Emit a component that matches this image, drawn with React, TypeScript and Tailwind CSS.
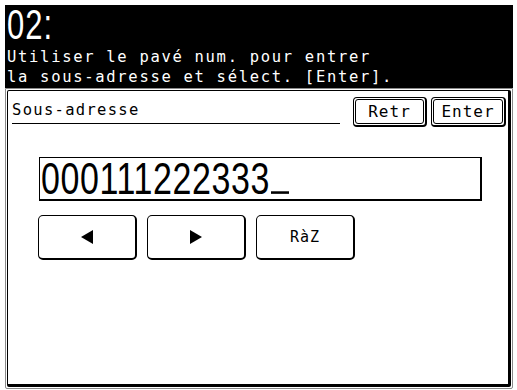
const mono = "font-['DejaVu_Sans_Mono','Liberation_Mono',monospace]";

function SoftKey({ label, width }: { label: string; width: string }) {
  return (
    <div className={`${width} h-[30px] rounded-[4px] border border-black border-r-2 border-b-2 p-[1px]`}>
      <div className="flex h-full items-center justify-center rounded-[3px] border border-black">
        <span className={`${mono} text-[16px] leading-none tracking-[1px] text-black`}>{label}</span>
      </div>
    </div>
  );
}

function Key({ children }: { children: React.ReactNode }) {
  return (
    <div className="flex h-[45px] w-[99px] items-center justify-center rounded-[5px] border border-black border-r-2 border-b-2 bg-white">
      {children}
    </div>
  );
}

export default function App() {
  return (
    <div className="h-[390px] w-[517px] overflow-hidden bg-white pl-[5px] pt-[5px]">
      {/* Header */}
      <div className="h-[83px] w-[508px] bg-black pl-[2px] pt-[1px] text-white">
        <div className="h-[40px] origin-top-left scale-y-[1.36] font-['Liberation_Sans',sans-serif] text-[31px] leading-[28px] tracking-[1px]">
          02:
        </div>
        <p className={`${mono} mt-[1px] text-[15.5px] leading-[20px] tracking-[1.7px]`}>
          Utiliser le pavé num. pour entrer
        </p>
        <p className={`${mono} text-[15.5px] leading-[20px] tracking-[1.7px]`}>
          la sous-adresse et sélect. [Enter].
        </p>
      </div>

      {/* Frame */}
      <div className="h-[301px] w-[508px] rounded-b-[2px] border border-[#8a8a8a] p-[1px]">
        <div className="h-full w-full rounded-[2px] border-l border-t border-black border-r-[3px] border-b-[3px]">
          <div className="flex items-start pt-[6px]">
            <div className="ml-[4px] h-[27px] w-[328px] border-b border-black">
              <span className={`${mono} text-[15.5px] leading-[20px] tracking-[1.3px] text-black`}>
                Sous-adresse
              </span>
            </div>
            <div className="ml-[13px] flex gap-[4px]">
              <SoftKey label="Retr" width="w-[74px]" />
              <SoftKey label="Enter" width="w-[75px]" />
            </div>
          </div>

          <div className="ml-[31px] mt-[30px] h-[44px] w-[443px] border border-black border-b-2 border-r-2 pl-[1px]">
            <div className="flex origin-top-left scale-y-[1.28] items-baseline font-['Liberation_Sans',sans-serif] text-[34px] leading-[32px] tracking-[0.6px] text-black">
              <span>000111222333</span>
              <span className="ml-[1px] inline-block h-[2px] w-[18px] bg-black" />
            </div>
          </div>

          <div className="ml-[30px] mt-[14px] flex gap-[10px]">
            <Key>
              <svg width="14" height="16" viewBox="0 0 14 16">
                <polygon points="13,1 13,15 1,8" fill="black" />
              </svg>
            </Key>
            <Key>
              <svg width="14" height="16" viewBox="0 0 14 16">
                <polygon points="1,1 1,15 13,8" fill="black" />
              </svg>
            </Key>
            <Key>
              <span className={`${mono} text-[15px] leading-none tracking-[1px] text-black`}>RàZ</span>
            </Key>
          </div>
        </div>
      </div>
    </div>
  );
}
